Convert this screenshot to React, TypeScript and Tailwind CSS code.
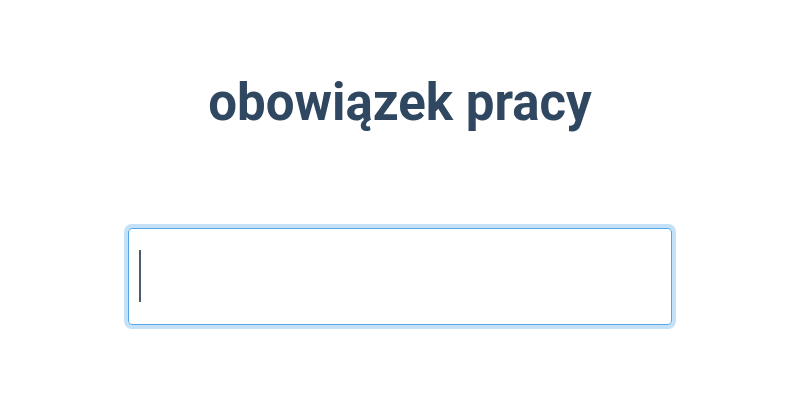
import React from "react";

export default function App() {
  return (
    <div className="w-[800px] h-[400px] bg-white flex flex-col items-center font-['Roboto',sans-serif]">
      <h1 className="mt-[73px] text-[51px] leading-[60px] font-bold text-[#2f4760]">obowiązek pracy</h1>
      <div className="relative mt-[95px]">
        <input className="block w-[544px] h-[97px] rounded-[4px] border border-[#55a6e6] px-[10px] text-[44px] text-[#2f4760] outline-none ring-4 ring-[#c4e1f7]" />
        {/* fake caret: focus blink isn't captured */}
        <span className="absolute left-[11px] top-[22px] w-[2px] h-[52px] bg-[#4a5d75]" />
      </div>
    </div>
  );
}
